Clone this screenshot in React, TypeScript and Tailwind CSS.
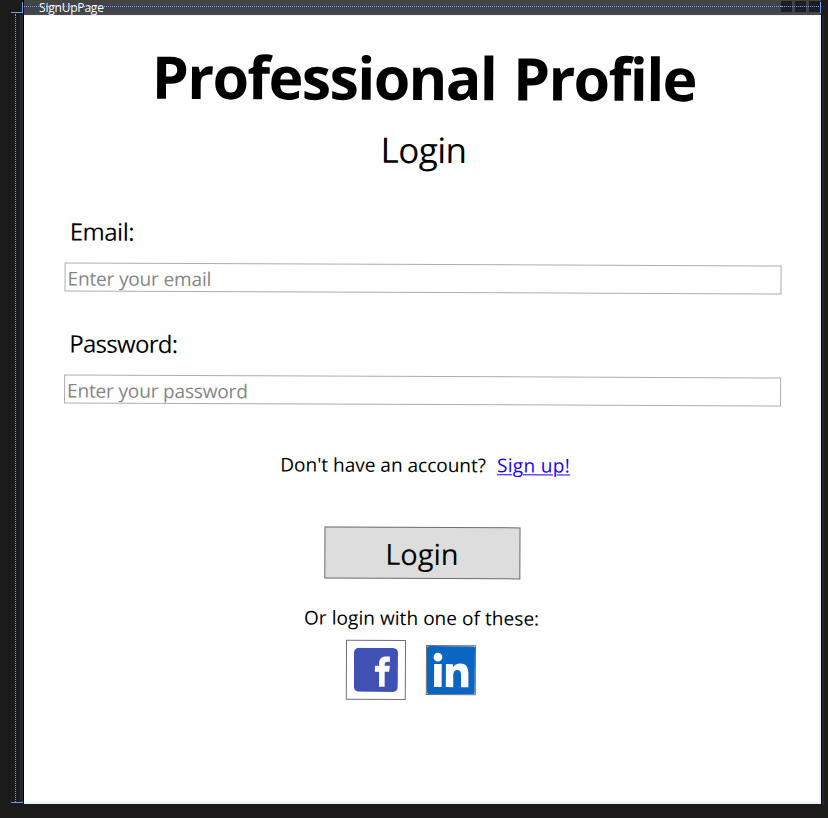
function Field({ label, hint, type }: { label: string; hint: string; type: string }) {
  const labelTracking = type === 'email' ? 'tracking-[-0.5px]' : 'tracking-[-0.7px]';
  return (
    <label className="block h-[112px] w-[717px]">
      <span className={`block h-[48px] pl-[5px] text-[24px] leading-[34px] ${labelTracking}`}>{label}</span>
      <input
        type={type}
        placeholder={hint}
        className="block h-[29px] w-full border border-[#abadb3] bg-white px-[2px] pt-[2px] text-[19px] leading-[26px] tracking-[-0.15px] outline-none placeholder:text-[#858585]"
      />
    </label>
  );
}

function TitleBar() {
  return (
    <div className="relative h-[15px] w-[797px] border-b-2 border-[#474a55] bg-[#434343]">
      <div className="absolute top-[6px] left-0 w-full border-t border-dotted border-[#6d9df5]" />
      <span className="absolute top-0 left-[15px] text-[12px] leading-[15px] tracking-[-0.2px] text-white">SignUpPage</span>
      <div className="absolute top-px right-px flex gap-[3px]">
        <i className="h-[11px] w-[11px] bg-[#1e1e1e]" />
        <i className="h-[11px] w-[11px] bg-[#1e1e1e]" />
        <i className="h-[11px] w-[11px] bg-[#1e1e1e]" />
      </div>
      <div className="absolute top-[6px] right-0 w-[40px] border-t border-dotted border-[#6d9df5]" />
      <div className="absolute top-[2px] right-0 h-[11px] w-px bg-[#6d9df5]" />
    </div>
  );
}

export default function App() {
  return (
    <div className="flex h-[818px] w-[828px] overflow-hidden bg-[#1b1b1b] font-['Open_Sans','Noto_Sans',sans-serif] text-black">
      <aside className="relative h-[804px] w-[24px] shrink-0 border-r border-black">
        <div className="absolute top-[2px] right-0 h-[11px] w-px bg-[#6d9df5]" />
        <div className="absolute top-[12px] left-[11px] h-px w-[12px] bg-[#6d9df5]" />
        <div className="absolute top-[14px] left-[15px] h-[788px] border-l border-dotted border-[#6d9df5]" />
        <div className="absolute top-[15px] right-0 h-[788px] w-[3px] bg-[#242831]" />
        <div className="absolute top-[802px] left-[11px] h-px w-[12px] bg-[#6d9df5]" />
      </aside>
      <div className="w-[797px] shrink-0">
        <TitleBar />
        <main className="h-[789px] border-t border-r-2 border-b-2 border-t-[#f0f2ff] border-r-[#edf2fe] border-b-[#e9f2fa] bg-white">
          <div className="flex h-[786px] w-[797px] rotate-[0.24deg] flex-col items-center">
            <h1 className="mt-[21px] h-[80px] text-[59px] leading-[80px] font-bold tracking-[-1.6px] whitespace-nowrap [word-spacing:3px]">Professional Profile</h1>
            <h2 className="mt-[8px] h-[50px] text-[35px] leading-[50px] tracking-[-0.5px]">Login</h2>
            <form className="mt-[41px] h-[224px] w-[717px]">
              <Field label="Email:" hint="Enter your email" type="email" />
              <Field label="Password:" hint="Enter your password" type="password" />
            </form>
            <p className="mt-[11px] ml-[6px] flex h-[28px] gap-[11px] text-[19px] leading-[28px] whitespace-nowrap">
              <span>Don't have an account?</span>
              <a className="tracking-[0.35px] text-[#1a00ff] underline decoration-1 underline-offset-2">Sign up!</a>
            </p>
            <button className="mt-[48px] h-[52px] w-[196px] border border-[#707070] bg-[#ddd] pt-[2px] text-[29px] leading-[46px]">Login</button>
            <p className="mt-[25px] h-[28px] text-[19px] leading-[28px] tracking-[0.06px] whitespace-nowrap">Or login with one of these:</p>
            <div className="mt-[8px] mr-[21px] flex items-center gap-[20px]">
              <button aria-label="Facebook" className="flex h-[60px] w-[60px] items-center justify-center border border-[#707070] bg-white">
                <svg width="44" height="44" viewBox="0 0 44 44">
                  <rect width="44" height="44" rx="5" fill="#3f51b5" />
                  <path fill="#fff" d="M25.2 39V24H21V18H25.2V15.5C25.2 11 27.5 8.7 32 8.7H36V14H33.5C31.3 14 30.8 15 30.8 16.5V18H36L35.2 24H30.8V39Z" />
                </svg>
              </button>
              <button aria-label="LinkedIn" className="h-[50px] w-[50px] border border-[#707070] bg-white">
                <svg width="48" height="48" viewBox="0 0 48 48">
                  <rect width="48" height="48" rx="2" fill="#0a66c2" />
                  <circle cx="11" cy="11" r="4.4" fill="#fff" />
                  <path fill="#fff" d="M7.2 18H14.8V41H7.2ZM19 18H26V21.3C27.3 19 30 17.4 33.3 17.4C40 17.4 41.5 22 41.5 28.2V41H34.2V29.8C34.2 26.5 33.7 23.8 30.6 23.8C27.4 23.8 26.4 26.2 26.4 29.4V41H19Z" />
                </svg>
              </button>
            </div>
          </div>
        </main>
      </div>
      <aside className="mt-[15px] h-[791px] w-[4px] border-l border-black">
        <div className="h-full w-[2px] bg-[#20242d]" />
      </aside>
    </div>
  );
}
